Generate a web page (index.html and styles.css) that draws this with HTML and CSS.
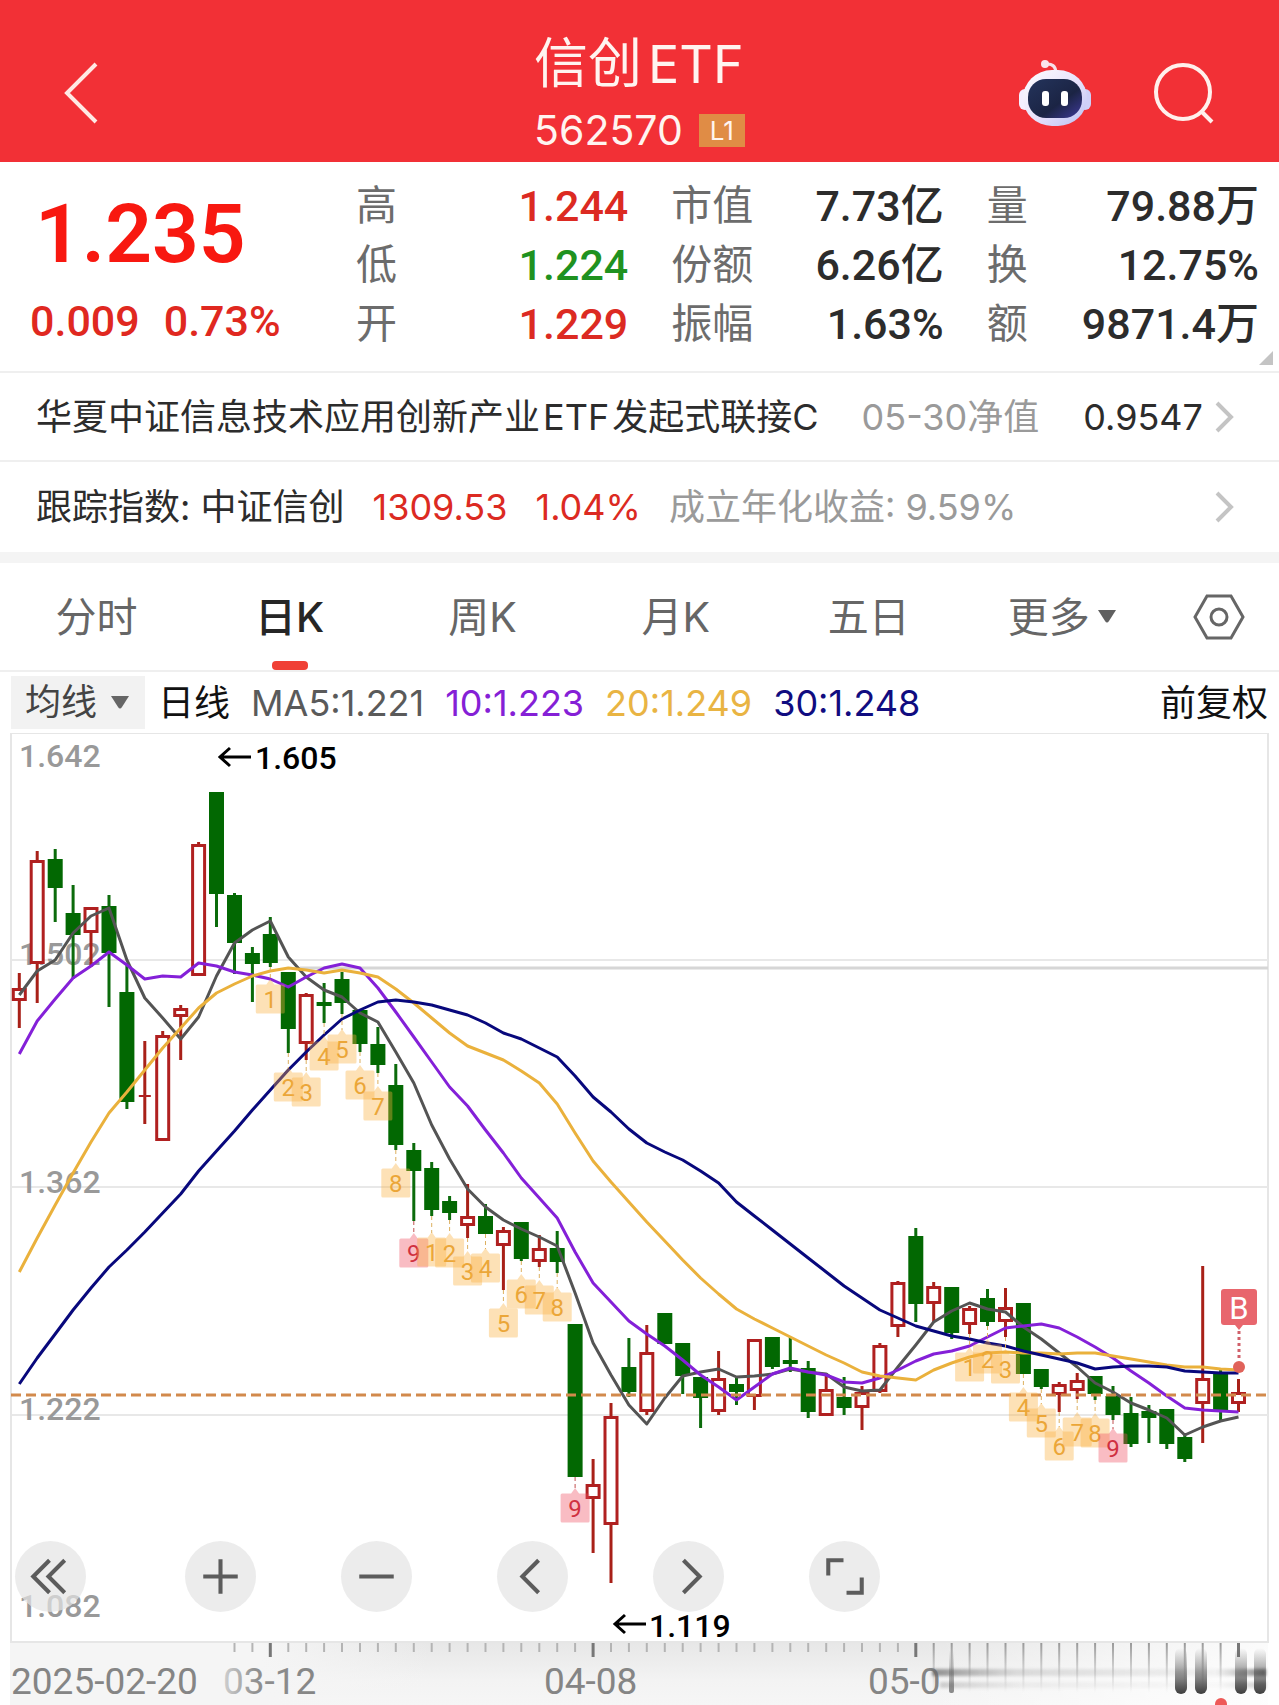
FILE: index.html
```html
<!DOCTYPE html>
<html lang="zh-CN">
<head>
<meta charset="utf-8">
<meta name="viewport" content="width=device-width, initial-scale=1">
<title>信创ETF 562570</title>
<link rel="stylesheet" href="styles.css">
</head>
<body>
<header class="topbar">
  <button class="icon-btn back" aria-label="返回">
    <svg width="34" height="62" viewBox="0 0 34 62"><path d="M32 2 3 31l29 29" fill="none" stroke="#ffe9e4" stroke-width="4"/></svg>
  </button>
  <div class="heading">
    <h1>信创<span class="latin">ETF</span></h1>
    <p class="code">562570 <span class="level">L1</span></p>
  </div>
  <div class="actions">
    <button class="icon-btn" aria-label="智能助手">
      <svg width="72" height="68" viewBox="0 0 72 68">
        <defs>
          <linearGradient id="shell" x1="0" y1="0" x2="1" y2="1"><stop offset="0" stop-color="#fff"/><stop offset=".55" stop-color="#e6e0fb"/><stop offset="1" stop-color="#b9c0f3"/></linearGradient>
          <linearGradient id="visor" x1="0" y1="0" x2="1" y2="1"><stop offset="0" stop-color="#24345c"/><stop offset=".6" stop-color="#1b2444"/><stop offset="1" stop-color="#3f3a9a"/></linearGradient>
        </defs>
        <path d="M27 5q9-1 10 8" fill="none" stroke="#f7dfe8" stroke-width="3"/>
        <circle cx="26" cy="5" r="4" fill="#fbe4ec"/>
        <rect x="0" y="30" width="12" height="21" rx="6" fill="#f4efff"/>
        <rect x="60" y="30" width="12" height="21" rx="6" fill="#cfd0f8"/>
        <rect x="4" y="11" width="64" height="56" rx="29" fill="url(#shell)"/>
        <rect x="9" y="20" width="54" height="39" rx="18" fill="url(#visor)"/>
        <rect x="23" y="32" width="7" height="15" rx="3" fill="#fff"/>
        <rect x="42" y="32" width="7" height="15" rx="3" fill="#fff"/>
      </svg>
    </button>
    <button class="icon-btn" aria-label="搜索">
      <svg width="62" height="62" viewBox="0 0 62 62"><g fill="none" stroke="#fff0ec" stroke-width="4"><circle cx="30" cy="30" r="27"/><path d="m48 49 11 11"/></g></svg>
    </button>
  </div>
</header>

<main>
  <section class="quote">
    <div class="price">
      <strong>1.235</strong>
      <p><span>0.009</span><span>0.73%</span></p>
    </div>
    <dl class="stats">
      <div><dt>高</dt><dd class="up">1.244</dd></div>
      <div><dt>市值</dt><dd>7.73亿</dd></div>
      <div><dt>量</dt><dd>79.88万</dd></div>
      <div><dt>低</dt><dd class="down">1.224</dd></div>
      <div><dt>份额</dt><dd>6.26亿</dd></div>
      <div><dt>换</dt><dd>12.75%</dd></div>
      <div><dt>开</dt><dd class="up">1.229</dd></div>
      <div><dt>振幅</dt><dd>1.63%</dd></div>
      <div><dt>额</dt><dd>9871.4万</dd></div>
    </dl>
    <span class="corner"></span>
  </section>

  <a class="info-row" href="#fund">
    <span class="fund-name">华夏中证信息技术应用创新产业<span class="abbr">ETF</span>发起式联接C</span>
    <span class="muted nav-date">05-30净值</span>
    <span class="nav-value">0.9547</span>
    <svg class="chevron" width="20" height="32" viewBox="0 0 20 32"><path d="m2 2 14 14L2 30" fill="none" stroke="#c4c4c4" stroke-width="4"/></svg>
  </a>
  <a class="info-row index-row" href="#index">
    <span>跟踪指数: 中证信创</span>
    <span class="up">1309.53</span>
    <span class="up">1.04%</span>
    <span class="muted">成立年化收益: 9.59%</span>
    <svg class="chevron" width="20" height="32" viewBox="0 0 20 32"><path d="m2 2 14 14L2 30" fill="none" stroke="#c4c4c4" stroke-width="4"/></svg>
  </a>

  <nav class="tabs">
    <button>分时</button>
    <button class="active">日K</button>
    <button>周K</button>
    <button>月K</button>
    <button>五日</button>
    <button>更多<svg width="18" height="14" viewBox="0 0 18 14"><path d="M0 0h18L11 11q-2 3-4 0Z" fill="#606060"/></svg></button>
    <button class="settings" aria-label="图表设置">
      <svg width="52" height="46" viewBox="0 0 52 46"><g fill="none" stroke="#666" stroke-width="3"><path d="M14 2h24l12 21-12 21H14L2 23Z"/><circle cx="26" cy="23" r="8"/></g></svg>
    </button>
  </nav>

  <div class="averages">
    <button class="ma-picker">均线<svg width="18" height="14" viewBox="0 0 18 14"><path d="M0 0h18L11 11q-2 3-4 0Z" fill="#666"/></svg></button>
    <span class="period">日线</span>
    <span class="ma5">MA5:1.221</span>
    <span class="ma10">10:1.223</span>
    <span class="ma20">20:1.249</span>
    <span class="ma30">30:1.248</span>
    <span class="adjust">前复权</span>
  </div>

  <section class="chart">
    <svg id="kline" viewBox="0 733 1279 972" role="img" aria-label="日K线图"></svg>
    <div class="tools">
      <button aria-label="最早"><svg viewBox="0 0 70 70"><path d="M34 19 18 35l16 16M49 19 33 35l16 16"/></svg></button>
      <button aria-label="放大"><svg viewBox="0 0 70 70"><path d="M18 35h34M35 18v34"/></svg></button>
      <button aria-label="缩小"><svg viewBox="0 0 70 70"><path d="M18 35h34"/></svg></button>
      <button aria-label="向左"><svg viewBox="0 0 70 70"><path d="M41 19 25 35l16 16"/></svg></button>
      <button aria-label="向右"><svg viewBox="0 0 70 70"><path d="m30 19 16 16-16 16"/></svg></button>
      <button aria-label="全屏"><svg viewBox="0 0 70 70"><path d="M19 34V19h15M37 51h15V36"/></svg></button>
    </div>
  </section>
</main>
<script src="chart.js"></script>
</body>
</html>
```
FILE: styles.css
```css
* { box-sizing: border-box; }

body {
  margin: 0;
  background: #fff;
  color: #2c2c2c;
  font-family: Inter, "Noto Sans CJK SC", sans-serif;
  font-size: 36px;
  line-height: 48px;
}

h1, p, dl, dd { margin: 0; }

button {
  padding: 0;
  border: 0;
  background: none;
  color: inherit;
  font: inherit;
  cursor: pointer;
}

svg { display: block; }

.up { color: #dc2a22; }
.down { color: #1f9220; }
.muted { color: #9a9a9a; }

/* Title bar */
.topbar {
  display: grid;
  grid-template-columns: 1fr auto 1fr;
  align-items: center;
  padding: 32px 64px 8px;
  background: #f23036;
  color: #fff4f0;
}
.back { justify-self: start; }
.heading {
  display: grid;
  grid-template-rows: 64px 48px;
  gap: 10px;
}
.heading h1 {
  font-size: 54px;
  font-weight: 400;
  line-height: 64px;
  white-space: nowrap;
}
.latin { margin-left: 6px; font-size: 52px; }
.code {
  display: flex;
  align-items: center;
  gap: 16px;
  font-size: 41px;
}
.level {
  padding: 0 11px;
  background: #e08c45;
  font-size: 26px;
  line-height: 33px;
}
.actions {
  display: flex;
  align-items: center;
  justify-content: flex-end;
  gap: 62px;
}

/* Quote summary */
.quote {
  position: relative;
  display: flex;
  align-items: flex-start;
  padding: 15px 20px 10px 30px;
  border-bottom: 2px solid #efefef;
  font-family: Roboto, "Noto Sans CJK SC", sans-serif;
  font-size: 43px;
  font-weight: 500;
}
.price { width: 326px; color: #e02820; }
.price strong {
  display: block;
  padding: 10px 0 0 5px;
  color: #f81810;
  font-size: 82px;
  font-weight: 600;
  line-height: 94px;
}
.price p { display: flex; gap: 24px; line-height: 80px; }
.stats {
  display: grid;
  flex: 1;
  grid-template-columns: repeat(3, 1fr);
  column-gap: 43px;
}
.stats div {
  display: flex;
  align-items: center;
  justify-content: space-between;
  line-height: 59px;
  white-space: nowrap;
}
.stats dt { color: #6c6c6c; font-size: 41px; font-weight: 400; }
.corner {
  position: absolute;
  right: 6px;
  bottom: 6px;
  border: 7px solid #c4c4c4;
  border-top-color: transparent;
  border-left-color: transparent;
}

/* Fund and index links */
.info-row {
  display: flex;
  align-items: center;
  height: 89px;
  padding: 0 44px 0 36px;
  border-bottom: 2px solid #efefef;
  color: #2c2c2c;
  text-decoration: none;
  white-space: nowrap;
}
.abbr { margin: 0 3px; }
.nav-date { margin-left: auto; }
.nav-value { margin: 0 12px 0 44px; }
.index-row {
  gap: 28px;
  height: 101px;
  border-bottom: 11px solid #f4f4f4;
}
.index-row .chevron { margin-left: auto; }

/* Period tabs */
.tabs {
  display: grid;
  grid-template-columns: repeat(6, 16fr) 10fr;
  height: 109px;
  border-bottom: 2px solid #efefef;
  color: #666;
  font-size: 41px;
}
.tabs button {
  position: relative;
  display: flex;
  align-items: center;
  justify-content: center;
  gap: 8px;
}
.tabs .active { color: #262626; font-weight: 500; }
.tabs .active::after {
  content: "";
  position: absolute;
  bottom: 0;
  width: 36px;
  height: 9px;
  border-radius: 4px;
  background: #f04035;
}

/* Moving averages */
.averages {
  display: flex;
  align-items: center;
  gap: 21px;
  height: 61px;
  padding: 0 11px;
  white-space: nowrap;
}
.ma-picker {
  display: flex;
  align-items: center;
  gap: 14px;
  padding: 0 16px 0 14px;
  background: #f2f2f2;
  color: #444;
  line-height: 53px;
}
.period { margin-left: -8px; color: #111; }
.ma5 { color: #5a5a5a; }
.ma10 { color: #8520d6; }
.ma20 { color: #e9b443; }
.ma30 { color: #100c80; }
.adjust { margin-left: auto; color: #111; }

/* Candlestick chart */
.chart { position: relative; }
#kline { width: 100%; height: auto; font-family: Roboto, sans-serif; }
.scale { fill: #999; font-size: 32px; font-weight: 500; }
.extreme { fill: #000; font-size: 32px; font-weight: 500; }
.date { fill: #858585; font-size: 37px; }
.tag { font-size: 24px; text-anchor: middle; }
.mark { fill: #fff; font-size: 31px; text-anchor: middle; }
.tools {
  position: absolute;
  bottom: 93px;
  left: 15px;
  display: flex;
  gap: 85px;
}
.tools button {
  width: 71px;
  height: 71px;
  border-radius: 50%;
  background: rgb(228 228 228 / 70%);
}
.tools button:first-child { margin-right: 14px; }
.tools path { fill: none; stroke: #5c5c5c; stroke-width: 4; }
```
FILE: chart.js
```js
const svg = document.getElementById("kline");
const NS = "http://www.w3.org/2000/svg";
const STEP = 17.93;
const xAt = (i) => Math.round((19.3 + STEP * i) * 10) / 10;

function draw(name, attrs, text) {
  const el = document.createElementNS(NS, name);
  for (const key in attrs) el.setAttribute(key, attrs[key]);
  if (text) el.textContent = text;
  svg.appendChild(el);
  return el;
}
const line = (d, stroke, width, extra) =>
  draw("path", { d, fill: "none", stroke, "stroke-width": width, ...extra });

// direction (r rise, g fall), wick top, body top, body bottom, wick bottom
const candles = [
  ["r",973,988,1001,1028],["r",851,860,964,1003],["g",849,859,888,922],["g",885,913,935,979],
  ["r",907,907,933,967],["g",895,906,953,1007],["g",963,992,1102,1109],["r",1041,1095,1097,1124],
  ["r",1031,1035,1141,1141],["r",1005,1008,1017,1060],["r",842,844,976,976],["g",792,792,894,927],
  ["g",893,895,943,974],["g",947,953,964,1002],["g",917,934,963,967],["g",972,972,1029,1053],
  ["r",993,994,1044,1060],["g",983,1002,1006,1023],["g",972,979,1003,1014],["g",1010,1010,1044,1052],
  ["g",1027,1044,1065,1073],["g",1064,1085,1145,1150],["g",1143,1150,1171,1221],["g",1162,1168,1210,1216],
  ["g",1196,1201,1213,1220],["r",1184,1216,1226,1238],["g",1204,1216,1234,1234],["r",1227,1230,1246,1290],
  ["g",1222,1222,1259,1261],["r",1235,1248,1262,1267],["g",1231,1248,1262,1273],["g",1324,1324,1477,1477],
  ["r",1459,1484,1499,1553],["r",1403,1416,1525,1583],["g",1338,1367,1392,1397],["r",1325,1352,1412,1415],
  ["g",1313,1313,1344,1344],["g",1343,1343,1376,1394],["g",1377,1377,1398,1428],["r",1351,1378,1412,1415],
  ["g",1377,1384,1392,1405],["r",1339,1339,1397,1410],["g",1337,1337,1367,1369],["g",1337,1360,1364,1372],
  ["g",1361,1368,1412,1418],["r",1373,1389,1416,1416],["g",1377,1397,1408,1415],["r",1386,1392,1408,1430],
  ["r",1343,1345,1392,1393],["r",1281,1282,1327,1337],["g",1228,1236,1304,1322],["r",1282,1286,1304,1322],
  ["g",1287,1287,1333,1339],["r",1306,1308,1325,1334],["g",1289,1298,1322,1326],["r",1288,1307,1322,1337],
  ["g",1303,1303,1374,1374],["g",1369,1369,1387,1389],["r",1382,1384,1395,1412],["r",1373,1380,1391,1399],
  ["g",1376,1376,1394,1400],["g",1386,1396,1415,1420],["g",1397,1413,1444,1447],["g",1405,1411,1418,1443],
  ["g",1409,1409,1444,1449],["g",1434,1437,1459,1462],["r",1266,1378,1404,1443],["g",1369,1373,1410,1422],
  ["r",1379,1392,1404,1412]
];

const averages = [
  ["#545454", [995,971,960,933,916,908,960,998,1018,1039,1017,976,943,930,921,957,977,990,997,1013,1022,1052,1083,1125,1159,1189,1207,1220,1229,1237,1246,1293,1343,1375,1405,1424,1398,1376,1372,1369,1377,1376,1374,1369,1372,1374,1387,1391,1390,1367,1345,1322,1311,1303,1309,1312,1327,1339,1353,1367,1383,1392,1403,1410,1418,1435,1427,1421,1417]],
  ["#8420d8", [1054,1021,999,978,966,952,965,979,976,977,963,966,972,975,979,987,977,968,964,968,988,1012,1037,1062,1087,1106,1130,1153,1178,1198,1218,1252,1283,1302,1321,1334,1346,1360,1375,1387,1400,1387,1374,1368,1372,1375,1382,1383,1378,1370,1361,1354,1351,1346,1337,1328,1326,1324,1328,1337,1347,1358,1371,1383,1396,1408,1410,1411,1412]],
  ["#eab13c", [1272,1238,1205,1173,1142,1113,1092,1070,1048,1028,1008,993,984,976,971,968,970,973,970,973,977,989,1003,1018,1033,1046,1053,1060,1071,1083,1104,1133,1161,1182,1202,1222,1241,1260,1278,1294,1309,1319,1328,1337,1346,1355,1363,1372,1376,1378,1380,1370,1363,1357,1353,1352,1353,1353,1354,1353,1353,1356,1359,1362,1365,1367,1367,1369,1370]],
  ["#08087c", [1384,1358,1334,1310,1288,1267,1250,1232,1213,1194,1171,1151,1131,1110,1090,1070,1052,1035,1019,1010,1002,1000,1002,1005,1010,1015,1023,1033,1039,1048,1057,1076,1097,1112,1129,1143,1152,1160,1171,1183,1202,1216,1230,1244,1258,1272,1286,1298,1310,1318,1326,1331,1336,1339,1343,1346,1351,1355,1359,1363,1369,1367,1366,1366,1367,1371,1372,1373,1373]]
];

// candle index, count, centre of the tag
const tags = [
  [14,1,999],[15,2,1087],[16,3,1092],[17,4,1056],[18,5,1049],[19,6,1085],[20,7,1106],[21,8,1183],[22,9,1253],
  [23,1,1252],[24,2,1253],[25,3,1271],[26,4,1268],[27,5,1323],[28,6,1294],[29,7,1300],[30,8,1307],[31,9,1508],
  [53,1,1367],[54,2,1359],[55,3,1369],[56,4,1407],[57,5,1423],[58,6,1446],[59,7,1432],[60,8,1433],[61,9,1448]
];

// Gradients of the date strip
const defs = draw("defs", {});
defs.innerHTML = `
  <linearGradient id="strip" x1="0" y1="0" x2="0" y2="1"><stop offset="0" stop-color="#e7e7e7"/><stop offset=".6" stop-color="#f3f3f3"/><stop offset="1" stop-color="#f6f6f6"/></linearGradient>
  <linearGradient id="stripLeft"><stop offset="0" stop-color="#f5f5f5"/><stop offset=".6" stop-color="#f5f5f5"/><stop offset="1" stop-color="#f5f5f5" stop-opacity="0"/></linearGradient>
  <linearGradient id="stripRight"><stop offset="0" stop-color="#fff" stop-opacity="0"/><stop offset="1" stop-color="#fff" stop-opacity=".85"/></linearGradient>
  <linearGradient id="trail" x1="0" y1="0" x2="0" y2="1"><stop offset="0" stop-color="#555" stop-opacity="0"/><stop offset="1" stop-color="#3c3c3c"/></linearGradient>
  <linearGradient id="tick" x1="0" y1="0" x2="0" y2="1"><stop offset="0" stop-color="#999"/><stop offset="1" stop-color="#bbb" stop-opacity="0"/></linearGradient>
  <linearGradient id="bar"><stop offset="0" stop-color="#666" stop-opacity=".7"/><stop offset=".25" stop-color="#999" stop-opacity=".3"/><stop offset=".85" stop-color="#aaa" stop-opacity=".12"/><stop offset="1" stop-color="#555" stop-opacity=".8"/></linearGradient>
  <linearGradient id="fadeText"><stop offset="0" stop-color="#d0d0d0"/><stop offset=".35" stop-color="#909090"/><stop offset="1" stop-color="#858585"/></linearGradient>
  <filter id="soft" x="-20%" y="-50%" width="140%" height="200%"><feGaussianBlur stdDeviation="1.5"/></filter>`;

// Frame and grid
draw("rect", { x: 11, y: 733, width: 1257, height: 909, fill: "none", stroke: "#e6e6e6", "stroke-width": 2 });
line("M12 960H1268M12 1187H1268M12 1415H1268", "#e8e8e8", 2);
line("M300 968H1268", "#d6d6d6", 3);

[["1.642",767],["1.502",965],["1.362",1193],["1.222",1420],["1.082",1617]]
  .forEach(([t, y]) => draw("text", { x: 19, y, class: "scale" }, t));

candles.forEach(([dir, high, top, bottom, low], i) => {
  const x = xAt(i);
  const up = dir === "r";
  line(`M${x} ${high}V${top}M${x} ${bottom}V${low}`, up ? "#a82018" : "#0b6b0b", 3);
  if (up && bottom - top > 3) {
    draw("rect", { x: x - 6, y: top + 1.5, width: 12, height: bottom - top - 3, fill: "#fff", stroke: "#b02020", "stroke-width": 3 });
  } else {
    draw("rect", { x: x - (up ? 6 : 7.5), y: top, width: up ? 12 : 15, height: bottom - top, fill: up ? "#b02020" : "#026802" });
  }
});

averages.forEach(([colour, values]) =>
  line("M" + values.map((y, i) => xAt(i) + " " + y).join("L"), colour, 3, { "stroke-linejoin": "round" }));

line("M11 1395H1268", "#d28a4c", 3, { "stroke-dasharray": "10 5" });

tags.forEach(([i, n, y]) => {
  const x = xAt(i);
  const nine = n === 9;
  line(`M${x} ${candles[i][4]}V${y - 19}`, nine ? "#c05050" : "#dcb060", 1, { "stroke-dasharray": "4 3" });
  draw("path", {
    d: `M${x - 13} ${y - 14.5}H${x - 4}L${x} ${y - 20}L${x + 4} ${y - 14.5}H${x + 13}Q${x + 14.5} ${y - 14.5} ${x + 14.5} ${y - 13}V${y + 13}Q${x + 14.5} ${y + 14.5} ${x + 13} ${y + 14.5}H${x - 13}Q${x - 14.5} ${y + 14.5} ${x - 14.5} ${y + 13}V${y - 13}Q${x - 14.5} ${y - 14.5} ${x - 13} ${y - 14.5}Z`,
    fill: nine ? "#ee5060" : "#f9b040", "fill-opacity": 0.38
  });
  draw("text", { x, y: y + 9, class: "tag", fill: nine ? "#d03040" : "#eba638" }, String(n));
});

// Highest and lowest price
line("M251 757H220M230 748L220 757L230 766", "#000", 3);
draw("text", { x: 255, y: 769, class: "extreme" }, "1.605");
line("M646 1624H615M625 1615L615 1624L625 1633", "#000", 3);
draw("text", { x: 649, y: 1637, class: "extreme" }, "1.119");

// Buy marker
draw("path", { d: "M1224 1289H1254Q1257 1289 1257 1292V1322Q1257 1325 1254 1325H1243L1239 1330L1235 1325H1224Q1221 1325 1221 1322V1292Q1221 1289 1224 1289Z", fill: "#e8666d" });
draw("text", { x: 1239, y: 1319, class: "mark" }, "B");
line("M1239 1331V1361", "#d0606a", 3, { "stroke-dasharray": "3 3" });
draw("circle", { cx: 1239, cy: 1367, r: 6, fill: "#e0625a" });

// Date strip
draw("rect", { x: 10, y: 1643, width: 1258, height: 62, fill: "url(#strip)" });
draw("rect", { x: 10, y: 1643, width: 420, height: 62, fill: "url(#stripLeft)" });
draw("rect", { x: 920, y: 1643, width: 348, height: 62, fill: "url(#stripRight)" });
for (let i = 12; i <= 68; i++) {
  const major = [14, 32, 50, 68].includes(i);
  if (i > 50 && !major) {
    draw("rect", { x: xAt(i) - 1, y: 1643, width: 2, height: 50, fill: "url(#tick)" });
  } else {
    line(`M${xAt(i)} 1643V${major ? 1657 : 1652}`, major ? "#777" : "#b4b4b4", major ? 3 : 2);
  }
}
[[11,"2025-02-20"],[544,"04-08"],[868,"05-0"]]
  .forEach(([x, t]) => draw("text", { x, y: 1694, class: "date" }, t));
draw("text", { x: 223, y: 1694, class: "date", style: "fill:url(#fadeText)" }, "03-12");
draw("rect", { x: 932, y: 1669, width: 334, height: 7, fill: "url(#bar)", filter: "url(#soft)" });
draw("rect", { x: 940, y: 1682, width: 326, height: 6, fill: "url(#bar)", opacity: 0.4, filter: "url(#soft)" });
[1181, 1201, 1241, 1260].forEach((x) =>
  draw("rect", { x: x - 6, y: 1648, width: 12, height: 46, rx: 6, fill: "url(#trail)" }));
draw("rect", { x: 949, y: 1650, width: 5, height: 43, rx: 2, fill: "url(#trail)", opacity: 0.6 });
draw("circle", { cx: 1221, cy: 1704, r: 6, fill: "#ee5a58" });
```
